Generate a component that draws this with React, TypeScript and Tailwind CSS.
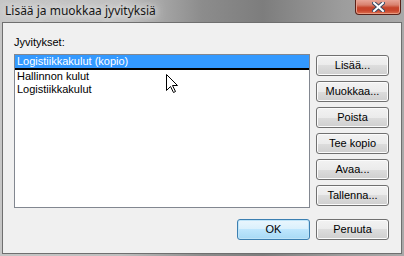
const sideButtons = ["Lisää...", "Muokkaa...", "Poista", "Tee kopio", "Avaa...", "Tallenna..."];

const btn =
  "flex h-[21px] w-[73px] items-center justify-center rounded-[3px] border border-[#707070] bg-[linear-gradient(#f2f2f2_0%,#ebebeb_50%,#dddddd_50%,#cfcfcf_100%)] text-[11px] leading-none text-black shadow-[inset_0_0_0_1px_#fbfbfb]";

const okBtn =
  "flex h-[21px] w-[73px] items-center justify-center rounded-[3px] border border-[#3c7fb1] bg-[linear-gradient(#eaf6fd_0%,#d9f0fc_50%,#bee6fd_50%,#a7d9f5_100%)] text-[11px] leading-none text-black shadow-[inset_0_0_0_1px_#bfe4f8]";

function CloseButton() {
  return (
    <div className="flex h-[15px] w-[46px] items-center justify-center rounded-b-[4px] border border-t-0 border-[#5a2118] bg-[linear-gradient(#e8a597_0%,#d9826f_35%,#c6442a_55%,#c9462c_75%,#dc7152_100%)] shadow-[inset_0_-1px_0_#e99a80,inset_1px_0_0_#e6a08f,inset_-1px_0_0_#e6a08f]">
      <svg width="13" height="10" viewBox="0 0 13 10">
        <path
          d="M2 1 L11 9 M11 1 L2 9"
          stroke="#3b4a63"
          strokeWidth="4"
          strokeLinecap="square"
        />
        <path
          d="M2 1 L11 9 M11 1 L2 9"
          stroke="#ffffff"
          strokeWidth="2"
          strokeLinecap="square"
        />
      </svg>
    </div>
  );
}

function Cursor() {
  return (
    <svg
      className="absolute left-[166px] top-[74px]"
      width="13"
      height="20"
      viewBox="0 0 13 20"
    >
      <path
        d="M0.5 0.5 L0.5 16.5 L4.5 12.5 L7.5 18.5 L9.5 17.5 L6.5 11.5 L11.5 11.5 Z"
        fill="#ffffff"
        stroke="#000000"
        strokeWidth="1"
        strokeLinejoin="miter"
      />
    </svg>
  );
}

export default function App() {
  return (
    <div className="relative flex h-[256px] w-[404px] flex-col overflow-hidden bg-[linear-gradient(90deg,#c6c6c6_0%,#bfbfbf_30%,#8c8c8c_50%,#7d7d7d_65%,#9d9d9d_85%,#a9a9a9_100%)] font-['Liberation_Sans',Arial,sans-serif]">
      <div className="flex h-[22px] shrink-0 items-start justify-between">
        <span className="pl-[5px] pt-[3px] font-['Noto_Sans',sans-serif] text-[12px] leading-[15px] text-[#161616] [text-shadow:0_0_6px_#ececec,0_0_10px_#e6e6e6,0_0_14px_#dddddd]">
          Lisää ja muokkaa jyvityksiä
        </span>
        <div className="mr-[3px]">
          <CloseButton />
        </div>
      </div>

      <div className="mx-[2px] flex h-[232px] w-[400px] flex-col border border-[#6f6f6f] bg-[#f0f0f0] pl-[11px] pr-[12px] pt-[13px]">
        <div className="h-[13px] text-[11px] leading-[13px] text-black">Jyvitykset:</div>
        <div className="mt-[5px] flex gap-[6px]">
          <div className="flex h-[154px] w-[296px] flex-col border border-[#828790] bg-white text-[11px] leading-[13px]">
            <div className="h-[13px] bg-[#3399ff] pl-[2px] text-white">Logistiikkakulut (kopio)</div>
            <div className="h-[2px] bg-black" />
            <div className="h-[13px] pl-[2px] text-black">Hallinnon kulut</div>
            <div className="h-[13px] pl-[2px] text-black">Logistiikkakulut</div>
          </div>
          <div className="mt-[1px] flex flex-col gap-[5px]">
            {sideButtons.map((label) => (
              <div key={label} className={btn}>
                {label}
              </div>
            ))}
          </div>
        </div>
        <div className="mt-[11px] flex justify-end gap-[6px]">
          <div className={okBtn}>OK</div>
          <div className={btn}>Peruuta</div>
        </div>
      </div>

      <Cursor />
    </div>
  );
}
